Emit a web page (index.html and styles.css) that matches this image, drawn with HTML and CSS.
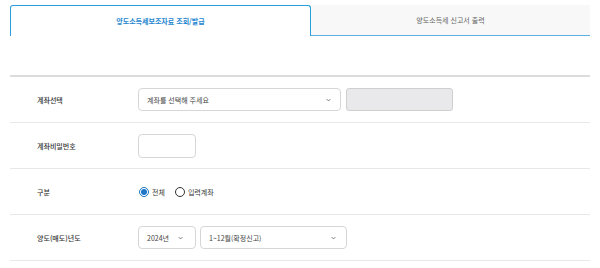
FILE: index.html
```html
<!DOCTYPE html>
<html lang="ko">
<head>
<meta charset="utf-8">
<link rel="stylesheet" href="styles.css">
</head>
<body>
<div class="wrap">
  <div class="tabs">
    <div class="tab active">양도소득세보조자료 조회/발급</div>
    <div class="tab">양도소득세 신고서 출력</div>
  </div>
  <div class="form">
    <div class="row">
      <div class="label">계좌선택</div>
      <div class="field">
        <div class="select sel-account"><span>계좌를 선택해 주세요</span><svg class="chev" viewBox="0 0 8 5"><path d="M1 1l3 3 3-3" fill="none" stroke="#555" stroke-width="1.2"/></svg></div>
        <div class="disabled-box"></div>
      </div>
    </div>
    <div class="row">
      <div class="label">계좌비밀번호</div>
      <div class="field">
        <div class="input pw"></div>
      </div>
    </div>
    <div class="row">
      <div class="label">구분</div>
      <div class="field radios">
        <label class="radio"><span class="dot on"></span>전체</label>
        <label class="radio"><span class="dot"></span>입력계좌</label>
      </div>
    </div>
    <div class="row">
      <div class="label">양도(매도)년도</div>
      <div class="field">
        <div class="select sel-year"><span>2024년</span><svg class="chev" viewBox="0 0 8 5"><path d="M1 1l3 3 3-3" fill="none" stroke="#555" stroke-width="1.2"/></svg></div>
        <div class="select sel-month"><span>1~12월(확정신고)</span><svg class="chev" viewBox="0 0 8 5"><path d="M1 1l3 3 3-3" fill="none" stroke="#555" stroke-width="1.2"/></svg></div>
      </div>
    </div>
  </div>
</div>
</body>
</html>
```
FILE: styles.css
```css
* { box-sizing: border-box; }
html, body { margin: 0; background: #fff; }
body {
  font-family: "Noto Sans CJK KR", "Noto Sans", sans-serif;
  font-size: 7px;
  color: #333;
}
.wrap { padding: 5px 10px 0 10px; width: 600px; }
.tabs { display: flex; height: 31px; }
.tab {
  flex: 1;
  display: flex;
  align-items: center;
  justify-content: center;
  font-size: 7px;
}
.tab.active {
  flex: 0 0 301px;
  border: 1px solid #2b9ee0;
  border-bottom: none;
  border-radius: 3px 3px 0 0;
  color: #1d86d0;
  font-weight: 700;
}
.tab:not(.active) {
  background: #f8f8f8;
  border-bottom: 1px solid #5fb0e2;
  color: #666;
}
.form {
  margin-top: 39px;
  border-top: 2px solid #dcdcdc;
}
.row {
  display: flex;
  align-items: center;
  height: 46px;
  border-bottom: 1px solid #e8e8e8;
}
.label {
  width: 128px;
  padding-left: 27px;
  color: #333;
  font-weight: 500;
}
.field { display: flex; align-items: center; gap: 4px; }
.select {
  display: flex;
  align-items: center;
  justify-content: space-between;
  height: 23px;
  padding: 0 9px 0 8px;
  border: 1px solid #d6d6d6;
  border-radius: 4px;
  background: #fff;
  color: #444;
}
.chev { width: 5px; height: 4px; }
.sel-account { width: 203px; }
.disabled-box {
  width: 107px;
  height: 23px;
  border: 1px solid #cfcfcf;
  border-radius: 3px;
  background: #e9e9eb;
  margin-left: 1px;
}
.input {
  height: 24px;
  border: 1px solid #d6d6d6;
  border-radius: 4px;
}
.pw { width: 58px; }
.radios { gap: 10px; padding-left: 1px; }
.radio { display: flex; align-items: center; gap: 3px; color: #333; }
.dot {
  width: 10px; height: 10px;
  border: 1px solid #333;
  border-radius: 50%;
  display: flex; align-items: center; justify-content: center;
}
.dot.on { border-color: #1d78c6; }
.dot.on::after {
  content: "";
  width: 6px; height: 6px;
  border-radius: 50%;
  background: #1d78c6;
}
.sel-year { width: 58px; padding-right: 12px; }
.sel-month { width: 147px; padding-right: 10px; }
```
